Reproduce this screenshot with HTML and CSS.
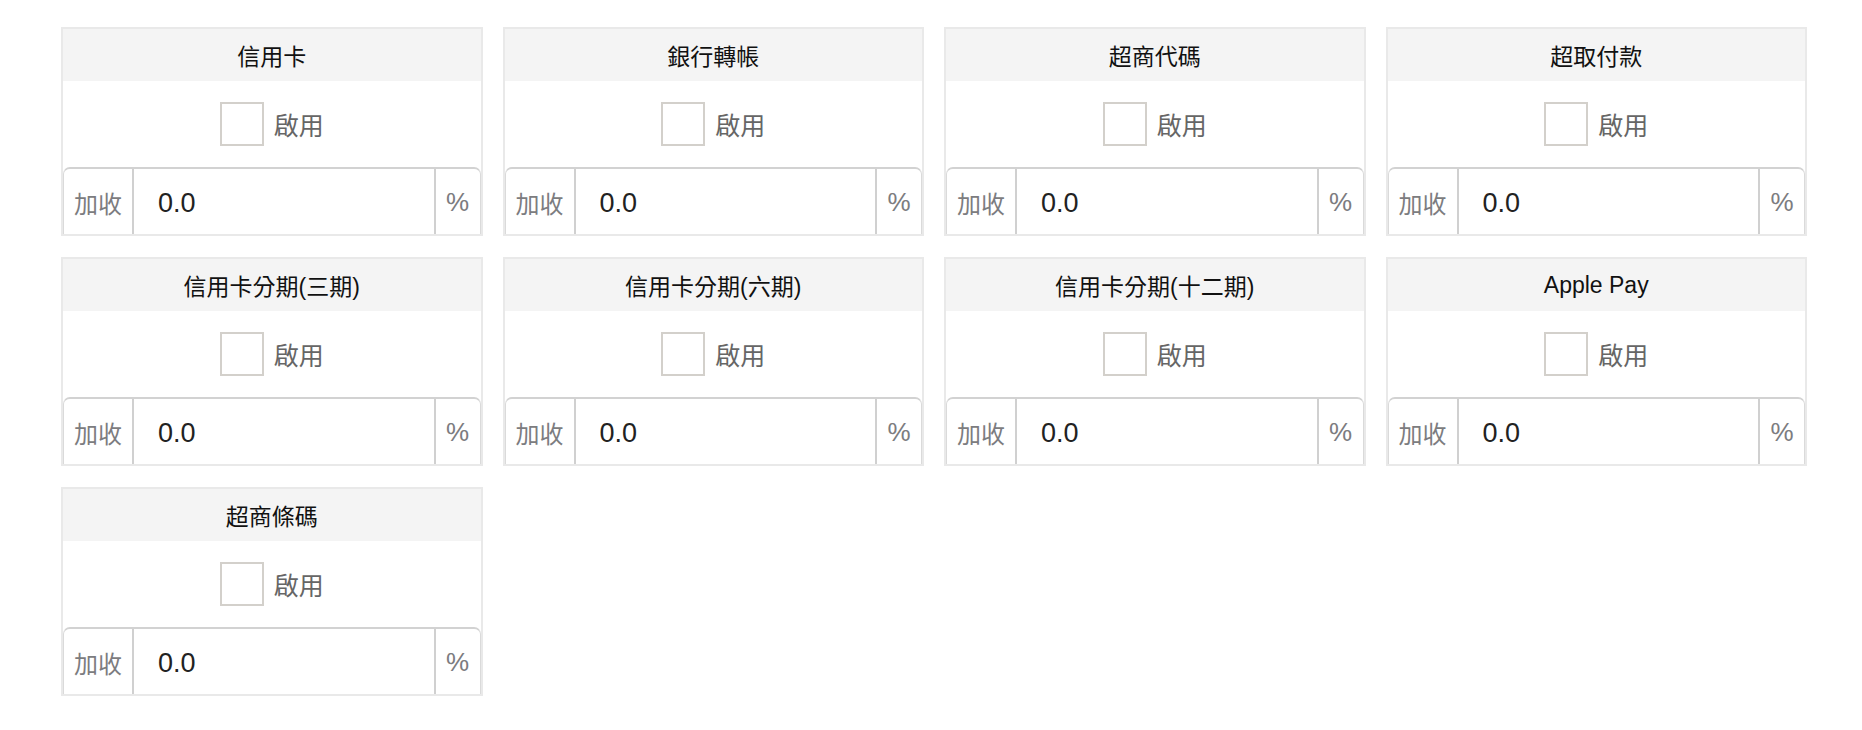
FILE: index.html
```html
<!DOCTYPE html>
<html lang="zh-Hant">
<head>
<meta charset="utf-8">
<title>付款方式</title>
<link rel="stylesheet" href="styles.css">
</head>
<body>
<div class="grid">
  <div class="card"><div class="card-head">信用卡</div><div class="card-body"><label class="enable"><input type="checkbox" class="cb"><span>啟用</span></label></div><div class="igroup"><span class="addon left">加收</span><input class="ival" type="text" value="0.0"><span class="addon right">%</span></div></div>
  <div class="card"><div class="card-head">銀行轉帳</div><div class="card-body"><label class="enable"><input type="checkbox" class="cb"><span>啟用</span></label></div><div class="igroup"><span class="addon left">加收</span><input class="ival" type="text" value="0.0"><span class="addon right">%</span></div></div>
  <div class="card"><div class="card-head">超商代碼</div><div class="card-body"><label class="enable"><input type="checkbox" class="cb"><span>啟用</span></label></div><div class="igroup"><span class="addon left">加收</span><input class="ival" type="text" value="0.0"><span class="addon right">%</span></div></div>
  <div class="card"><div class="card-head">超取付款</div><div class="card-body"><label class="enable"><input type="checkbox" class="cb"><span>啟用</span></label></div><div class="igroup"><span class="addon left">加收</span><input class="ival" type="text" value="0.0"><span class="addon right">%</span></div></div>
  <div class="card"><div class="card-head">信用卡分期(三期)</div><div class="card-body"><label class="enable"><input type="checkbox" class="cb"><span>啟用</span></label></div><div class="igroup"><span class="addon left">加收</span><input class="ival" type="text" value="0.0"><span class="addon right">%</span></div></div>
  <div class="card"><div class="card-head">信用卡分期(六期)</div><div class="card-body"><label class="enable"><input type="checkbox" class="cb"><span>啟用</span></label></div><div class="igroup"><span class="addon left">加收</span><input class="ival" type="text" value="0.0"><span class="addon right">%</span></div></div>
  <div class="card"><div class="card-head">信用卡分期(十二期)</div><div class="card-body"><label class="enable"><input type="checkbox" class="cb"><span>啟用</span></label></div><div class="igroup"><span class="addon left">加收</span><input class="ival" type="text" value="0.0"><span class="addon right">%</span></div></div>
  <div class="card"><div class="card-head">Apple Pay</div><div class="card-body"><label class="enable"><input type="checkbox" class="cb"><span>啟用</span></label></div><div class="igroup"><span class="addon left">加收</span><input class="ival" type="text" value="0.0"><span class="addon right">%</span></div></div>
  <div class="card"><div class="card-head">超商條碼</div><div class="card-body"><label class="enable"><input type="checkbox" class="cb"><span>啟用</span></label></div><div class="igroup"><span class="addon left">加收</span><input class="ival" type="text" value="0.0"><span class="addon right">%</span></div></div>
</div>
</body>
</html>
```

FILE: styles.css
```css
* { box-sizing: border-box; }
html, body { margin: 0; padding: 0; background: #fff; }
body {
  font-family: "Liberation Sans", "Noto Sans CJK TC", sans-serif;
  color: #222;
}
.grid {
  display: grid;
  grid-template-columns: repeat(4, minmax(0, 1fr));
  column-gap: 20px;
  row-gap: 21px;
  width: 1746px;
  margin: 27px 0 0 61px;
}
.card {
  border: 2px solid #e9e9e9;
  display: flex;
  flex-direction: column;
  background: #fff;
  min-width: 0;
}
.card-head {
  height: 52px;
  background: #f4f4f4;
  display: flex;
  align-items: center;
  justify-content: center;
  font-size: 23px;
  color: #111;
}
.card-body {
  height: 86px;
  display: flex;
  align-items: center;
  justify-content: center;
  padding-bottom: 1px;
}
.enable {
  display: flex;
  align-items: center;
  gap: 10px;
  font-size: 25px;
  color: #666;
}
.cb {
  appearance: none;
  -webkit-appearance: none;
  margin: 0;
  width: 44px;
  height: 44px;
  border: 2px solid #d3d0cb;
  background: #fff;
}
.igroup {
  height: 67px;
  display: flex;
  border-top: 2px solid #d2d2d2;
  border-left: 1px solid #dadada;
  border-right: 1px solid #dadada;
  border-radius: 7px 7px 0 0;
}
.addon {
  flex: none;
  display: flex;
  align-items: center;
  justify-content: center;
  padding-top: 2px;
  font-size: 24px;
  color: #7c7c80;
}
.addon.left {
  width: 70px;
  border-right: 2px solid #d0d0d0;
}
.addon.right {
  width: 46px;
  border-left: 2px solid #d0d0d0;
  font-size: 26px;
}
.ival {
  flex: 1 1 0;
  width: 0;
  min-width: 0;
  border: 0;
  outline: none;
  padding: 4px 0 0 24px;
  font-family: "Liberation Sans", "Noto Sans CJK TC", sans-serif;
  font-size: 27px;
  color: #222;
  background: #fff;
}
```
